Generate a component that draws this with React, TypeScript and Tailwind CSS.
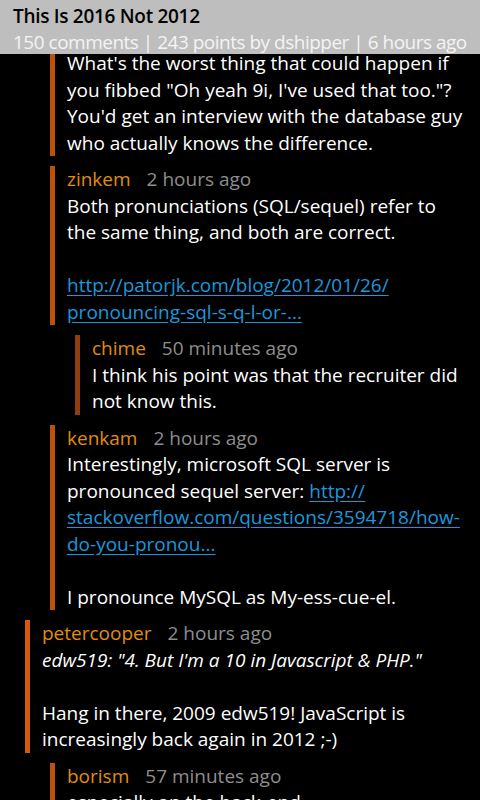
import React from 'react';

type Span = { text: string; link?: boolean; italic?: boolean };
type Line = Span[];

type Comment = {
  level: number;
  user?: string;
  time?: string;
  // paragraphs -> lines -> spans
  paragraphs: Line[][];
};

const t = (text: string): Line => [{ text }];
const a = (text: string): Line => [{ text, link: true }];

const comments: Comment[] = [
  {
    level: 2,
    paragraphs: [
      [
        t("What's the worst thing that could happen if"),
        t('you fibbed "Oh yeah 9i, I\'ve used that too."?'),
        t("You'd get an interview with the database guy"),
        t('who actually knows the difference.'),
      ],
    ],
  },
  {
    level: 2,
    user: 'zinkem',
    time: '2 hours ago',
    paragraphs: [
      [t('Both pronunciations (SQL/sequel) refer to'), t('the same thing, and both are correct.')],
      [a('http://patorjk.com/blog/2012/01/26/'), a('pronouncing-sql-s-q-l-or-...')],
    ],
  },
  {
    level: 3,
    user: 'chime',
    time: '50 minutes ago',
    paragraphs: [[t('I think his point was that the recruiter did'), t('not know this.')]],
  },
  {
    level: 2,
    user: 'kenkam',
    time: '2 hours ago',
    paragraphs: [
      [
        t('Interestingly, microsoft SQL server is'),
        [{ text: 'pronounced sequel server: ' }, { text: 'http://', link: true }],
        a('stackoverflow.com/questions/3594718/how-'),
        a('do-you-pronou...'),
      ],
      [t('I pronounce MySQL as My-ess-cue-el.')],
    ],
  },
  {
    level: 1,
    user: 'petercooper',
    time: '2 hours ago',
    paragraphs: [
      [[{ text: 'edw519: "4. But I\'m a 10 in Javascript & PHP."', italic: true }]],
      [t('Hang in there, 2009 edw519! JavaScript is'), t('increasingly back again in 2012 ;-)')],
    ],
  },
  {
    level: 2,
    user: 'borism',
    time: '57 minutes ago',
    paragraphs: [[t('especially on the back-end.')]],
  },
];

const indent: Record<number, string> = {
  1: 'ml-[25px]',
  2: 'ml-[50px]',
  3: 'ml-[75px]',
};

const barColor: Record<number, string> = {
  1: 'bg-[#d25a0a]',
  2: 'bg-[#bb520b]',
  3: 'bg-[#8f3e0b]',
};

function CommentRow({ comment, first }: { comment: Comment; first?: boolean }) {
  return (
    <div className={`flex ${indent[comment.level]} ${first ? '-mt-[4px]' : 'mt-[10px]'}`}>
      <div className={`w-[5px] shrink-0 ${barColor[comment.level]}`} />
      <div className="pl-[12px] pr-2 min-w-0">
        {comment.user && (
          <div className="flex gap-[16px] whitespace-nowrap">
            <span className="text-[#e08e0b]">{comment.user}</span>
            <span className="text-[#8e8e8e]">{comment.time}</span>
          </div>
        )}
        <div className="flex flex-col gap-[26.5px]">
          {comment.paragraphs.map((para, i) => (
            <div key={i}>
              {para.map((line, j) => (
                <div key={j} className="whitespace-nowrap">
                  {line.map((s, k) => (
                    <span
                      key={k}
                      className={
                        s.link
                          ? 'text-[#1b98dc] underline underline-offset-[3px]'
                          : s.italic
                          ? 'italic text-white'
                          : 'text-white'
                      }
                    >
                      {s.text}
                    </span>
                  ))}
                </div>
              ))}
            </div>
          ))}
        </div>
      </div>
    </div>
  );
}

export default function App() {
  return (
    <div
      className="w-[480px] h-[800px] overflow-hidden bg-black flex flex-col text-[19px] leading-[26.5px]"
      style={{ fontFamily: '"Open Sans", "Noto Sans", sans-serif' }}
    >
      {/* header */}
      <div className="relative z-10 bg-[#bebebe] h-[54px] shrink-0 px-[13px] pt-[2px]">
        <div className="text-black font-semibold tracking-[-0.3px] leading-[28px]">This Is 2016 Not 2012</div>
        <div className="text-[#f4f4f4] leading-[24px] whitespace-nowrap tracking-[-0.5px]">
          150 comments | 243 points by dshipper | 6 hours ago
        </div>
      </div>

      {/* comment list */}
      <div className="flex-1 overflow-hidden">
        {comments.map((c, i) => (
          <CommentRow key={i} comment={c} first={i === 0} />
        ))}
      </div>
    </div>
  );
}
